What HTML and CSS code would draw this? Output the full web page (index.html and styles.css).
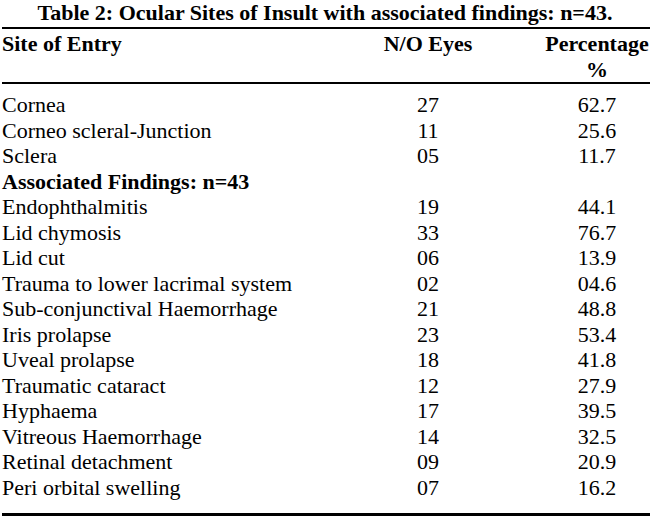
FILE: index.html
```html
<!DOCTYPE html>
<html lang="en">
<head>
<meta charset="utf-8">
<title>Table 2</title>
<link rel="stylesheet" href="styles.css">
</head>
<body>
<div class="page">
  <h1 class="caption">Table 2: Ocular Sites of Insult with associated findings: n=43.</h1>
  <table class="data">
    <colgroup>
      <col class="c-site">
      <col class="c-eyes">
      <col class="c-pct">
    </colgroup>
    <thead>
      <tr>
        <th class="left">Site of Entry</th>
        <th class="mid">N/O Eyes</th>
        <th class="mid">Percentage<br>%</th>
      </tr>
    </thead>
    <tbody>
      <tr class="first"><td>Cornea</td><td class="mid">27</td><td class="mid">62.7</td></tr>
      <tr><td>Corneo scleral-Junction</td><td class="mid">11</td><td class="mid">25.6</td></tr>
      <tr><td>Sclera</td><td class="mid">05</td><td class="mid">11.7</td></tr>
      <tr><td class="group">Associated Findings: n=43</td><td></td><td></td></tr>
      <tr><td>Endophthalmitis</td><td class="mid">19</td><td class="mid">44.1</td></tr>
      <tr><td>Lid chymosis</td><td class="mid">33</td><td class="mid">76.7</td></tr>
      <tr><td>Lid cut</td><td class="mid">06</td><td class="mid">13.9</td></tr>
      <tr><td>Trauma to lower lacrimal system</td><td class="mid">02</td><td class="mid">04.6</td></tr>
      <tr><td>Sub-conjunctival Haemorrhage</td><td class="mid">21</td><td class="mid">48.8</td></tr>
      <tr><td>Iris prolapse</td><td class="mid">23</td><td class="mid">53.4</td></tr>
      <tr><td>Uveal prolapse</td><td class="mid">18</td><td class="mid">41.8</td></tr>
      <tr><td>Traumatic cataract</td><td class="mid">12</td><td class="mid">27.9</td></tr>
      <tr><td>Hyphaema</td><td class="mid">17</td><td class="mid">39.5</td></tr>
      <tr><td>Vitreous Haemorrhage</td><td class="mid">14</td><td class="mid">32.5</td></tr>
      <tr><td>Retinal detachment</td><td class="mid">09</td><td class="mid">20.9</td></tr>
      <tr class="last"><td>Peri orbital swelling</td><td class="mid">07</td><td class="mid">16.2</td></tr>
    </tbody>
  </table>
</div>
</body>
</html>
```

FILE: styles.css
```css
html, body {
  margin: 0;
  padding: 0;
  background: #ffffff;
}

.page {
  width: 650px;
  color: #000000;
  font-family: "Liberation Serif", "Times New Roman", serif;
  font-size: 22px;
}

.caption {
  margin: 0 0 2px 0;
  font-size: 22px;
  line-height: 25px;
  font-weight: bold;
  text-align: center;
}

.data {
  margin-left: 2px;
  width: 648px;
  table-layout: fixed;
  border-collapse: collapse;
  border-spacing: 0;
}

.c-site { width: 310px; }
.c-eyes { width: 232px; }
.c-pct { width: 106px; }

.data th,
.data td {
  padding: 0;
  font-size: 22px;
  line-height: 25.5px;
  vertical-align: top;
  white-space: nowrap;
}

.data thead tr {
  border-top: 2px solid #000;
  border-bottom: 2px solid #000;
}

.data thead th {
  font-weight: bold;
  padding-top: 2px;
}

.data th.left,
.data td {
  text-align: left;
}

.data .mid {
  text-align: center;
}

.data tbody tr.first td {
  padding-top: 8px;
}

.data tbody tr.last td {
  padding-bottom: 13px;
}

.data tbody tr.last {
  border-bottom: 3px solid #000;
}

.data td.group {
  font-weight: bold;
}
```
